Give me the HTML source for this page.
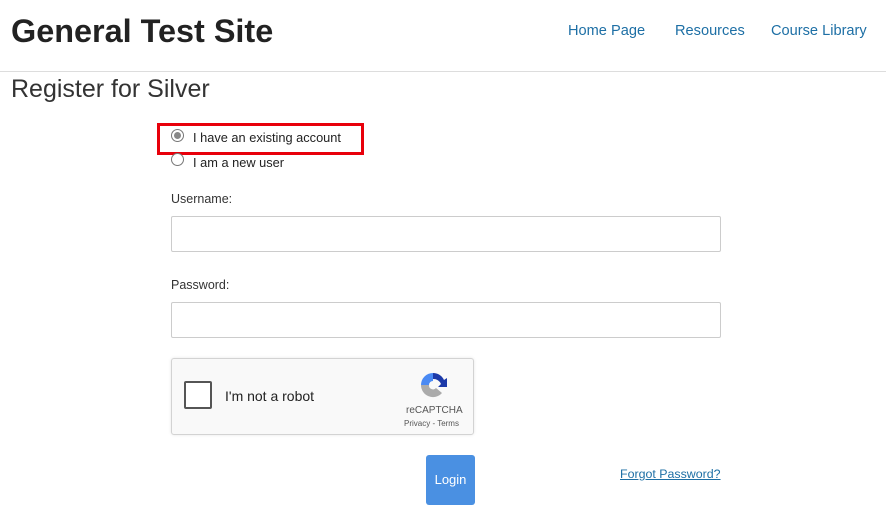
<!DOCTYPE html>
<html><head><meta charset="utf-8"><style>
body{margin:0;width:886px;height:527px;background:#fff;font-family:"Liberation Sans",sans-serif;color:#222;position:relative;overflow:hidden}
.a{position:absolute;white-space:nowrap}
.nav{color:#1d6fa5;font-size:14.6px;top:23px}
.inp{position:absolute;left:171px;width:548px;height:34px;border:1px solid #ccc;border-radius:2px}
.radio{position:absolute;width:11px;height:11px;border:1px solid #777;border-radius:50%;background:#fff}
</style></head><body>
<div class="a" style="left:11px;top:13px;font-size:32.4px;font-weight:bold;color:#222">General Test Site</div>
<div class="a nav" style="left:568px">Home Page</div>
<div class="a nav" style="left:675px">Resources</div>
<div class="a nav" style="left:771px">Course Library</div>
<div class="a" style="left:0;top:71px;width:886px;border-top:1px solid #ddd"></div>
<div class="a" style="left:11px;top:75px;font-size:25px;color:#333">Register for Silver</div>
<div class="a" style="left:157px;top:123px;width:201px;height:26px;border:3px solid #e8000b"></div>
<div class="radio" style="left:171px;top:129px"><div style="position:absolute;left:2px;top:2px;width:7px;height:7px;border-radius:50%;background:#888"></div></div>
<div class="a" style="left:193px;top:130px;font-size:12.8px">I have an existing account</div>
<div class="radio" style="left:171px;top:153px"></div>
<div class="a" style="left:193px;top:155px;font-size:12.8px">I am a new user</div>
<div class="a" style="left:171px;top:192px;font-size:12.5px;color:#333">Username:</div>
<div class="inp" style="top:216px"></div>
<div class="a" style="left:171px;top:278px;font-size:12.5px;color:#333">Password:</div>
<div class="inp" style="top:302px"></div>
<div class="a" style="left:171px;top:358px;width:301px;height:75px;border:1px solid #d3d3d3;border-radius:3px;background:#f9f9f9;box-shadow:0 0 3px rgba(0,0,0,.1)">
<div class="a" style="left:12px;top:22px;width:24px;height:24px;border:2px solid #555;border-radius:2px;background:#fff"></div>
<div class="a" style="left:53px;top:29px;font-size:14px;color:#222">I'm not a robot</div>
<svg class="a" style="left:245px;top:10px" width="32" height="32" viewBox="0 0 32 32"><path d="M16 4a12 12 0 0 1 11 7l3-2v9h-9l3-3a8 8 0 0 0-8-5z" fill="#1c3aa9"/><path d="M4 16a12 12 0 0 1 12-12v8a4 4 0 0 0-4 4z" fill="#4a8af4"/><path d="M4 16h8a4 4 0 0 0 7 3l6 5a12 12 0 0 1-21-8z" fill="#ababab"/></svg>
<div class="a" style="left:234px;top:46px;font-size:10px;color:#555">reCAPTCHA</div>
<div class="a" style="left:232px;top:60px;font-size:8px;color:#555">Privacy - Terms</div>
</div>
<div class="a" style="left:426px;top:455px;width:49px;height:50px;background:#4a90e2;border-radius:3px;color:#fff;font-size:13px;line-height:50px;text-align:center">Login</div>
<div class="a" style="left:620px;top:467px;font-size:12.4px;color:#1d6fa5;text-decoration:underline">Forgot Password?</div>
</body></html>
